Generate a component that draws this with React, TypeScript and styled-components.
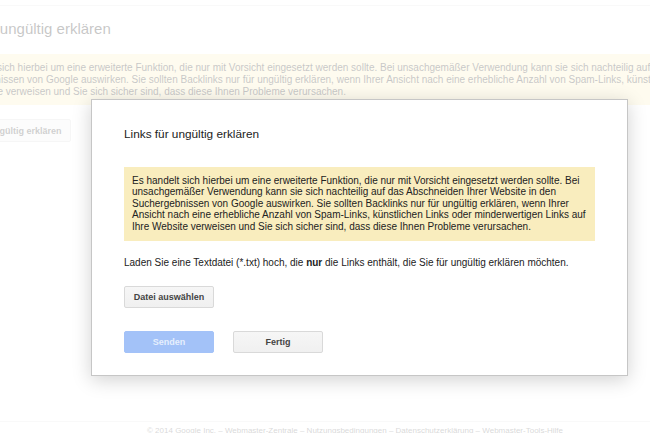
import styled, { createGlobalStyle } from 'styled-components';

const GlobalStyle = createGlobalStyle`
  html, body {
    margin: 0;
    padding: 0;
    overflow: hidden;
    background: #fff;
  }
  body {
    font-family: 'Liberation Sans', Arial, sans-serif;
    color: #222;
  }
`;

const Page = styled.div`
  position: relative;
  height: 433px;
  display: flex;
  flex-direction: column;
  overflow: hidden;
`;

const TopBar = styled.div`
  height: 5px;
  border-bottom: 1px solid #e5e5e5;
`;

const Content = styled.div`
  margin-left: -61px;
  display: flex;
  flex-direction: column;
  align-items: flex-start;
`;

const PageTitle = styled.h1`
  margin: 13px 0 0;
  font-size: 15px;
  font-weight: normal;
  color: #222;
  line-height: 20px;
`;

const PageWarning = styled.div`
  margin-top: 15px;
  width: 900px;
  padding: 8px 8px 7px;
  background: #f9edbe;
  font-size: 10px;
  line-height: 12px;
  color: #222;
`;

const PageButton = styled.div`
  margin-top: 14px;
  height: 21px;
  padding: 0 8px;
  display: flex;
  align-items: center;
  background: #f3f3f3;
  border: 1px solid #dcdcdc;
  border-radius: 2px;
  font-size: 9px;
  font-weight: bold;
  color: #444;
`;

const Footer = styled.div`
  margin-top: auto;
  border-top: 1px solid #e5e5e5;
  height: 11px;
  padding-left: 147px;
  font-size: 8px;
  line-height: 18px;
  color: #666;
  white-space: nowrap;
`;

const Overlay = styled.div`
  position: absolute;
  inset: 0;
  background: rgba(255, 255, 255, 0.75);
`;

const Dialog = styled.div`
  position: absolute;
  left: 91px;
  top: 99px;
  width: 471px;
  padding: 26px 32px 22px;
  background: #fff;
  border: 1px solid #c6c6c6;
  box-shadow: 0 4px 18px rgba(0, 0, 0, 0.18);
`;

const DialogTitle = styled.h2`
  margin: 0;
  font-size: 11.8px;
  font-weight: normal;
  line-height: 16px;
  color: #222;
`;

const Warning = styled.div`
  margin-top: 25px;
  padding: 8px 8px 9px;
  background: #f9edbe;
  font-size: 10px;
  line-height: 11.4px;
  color: #222;
`;

const Text = styled.p`
  margin: 16px 0 0;
  font-size: 10px;
  line-height: 12px;
  color: #222;
`;

const ButtonRow = styled.div<{ $top: number }>`
  display: flex;
  gap: 19px;
  margin-top: ${p => p.$top}px;
`;

const Button = styled.button<{ $primary?: boolean }>`
  width: 90px;
  height: 22px;
  padding: 0;
  border-radius: 2px;
  font-family: 'Liberation Sans', Arial, sans-serif;
  font-size: 9px;
  font-weight: bold;
  cursor: default;
  border: 1px solid ${p => (p.$primary ? '#a3c2f8' : '#d9d9d9')};
  background: ${p => (p.$primary ? '#a3c2f8' : 'linear-gradient(#f6f6f6, #f0f0f0)')};
  color: ${p => (p.$primary ? '#e6effd' : '#444')};
`;

export default function App() {
  return (
    <>
      <GlobalStyle />
      <Page>
        <TopBar />
        <Content>
          <PageTitle>Links für ungültig erklären</PageTitle>
          <PageWarning>
            Es handelt sich hierbei um eine erweiterte Funktion, die nur mit Vorsicht eingesetzt werden sollte. Bei
            unsachgemäßer Verwendung kann sie sich nachteilig auf das Abschneiden Ihrer Website in den Suchergebnissen
            von Google auswirken. Sie sollten Backlinks nur für ungültig erklären, wenn Ihrer Ansicht nach eine
            erhebliche Anzahl von Spam-Links, künstlichen Links oder minderwertigen Links auf Ihre Website verweisen
            und Sie sich sicher sind, dass diese Ihnen Probleme verursachen.
          </PageWarning>
          <PageButton>Links für ungültig erklären</PageButton>
        </Content>
        <Footer>
          © 2014 Google Inc. – Webmaster-Zentrale – Nutzungsbedingungen – Datenschutzerklärung –
          Webmaster-Tools-Hilfe
        </Footer>
        <Overlay>
          <Dialog>
            <DialogTitle>Links für ungültig erklären</DialogTitle>
            <Warning>
              Es handelt sich hierbei um eine erweiterte Funktion, die nur mit Vorsicht eingesetzt werden sollte. Bei
              unsachgemäßer Verwendung kann sie sich nachteilig auf das Abschneiden Ihrer Website in den
              Suchergebnissen von Google auswirken. Sie sollten Backlinks nur für ungültig erklären, wenn Ihrer
              Ansicht nach eine erhebliche Anzahl von Spam-Links, künstlichen Links oder minderwertigen Links auf
              Ihre Website verweisen und Sie sich sicher sind, dass diese Ihnen Probleme verursachen.
            </Warning>
            <Text>
              Laden Sie eine Textdatei (*.txt) hoch, die <b>nur</b> die Links enthält, die Sie für ungültig erklären
              möchten.
            </Text>
            <ButtonRow $top={17}>
              <Button>Datei auswählen</Button>
            </ButtonRow>
            <ButtonRow $top={23}>
              <Button $primary>Senden</Button>
              <Button>Fertig</Button>
            </ButtonRow>
          </Dialog>
        </Overlay>
      </Page>
    </>
  );
}
